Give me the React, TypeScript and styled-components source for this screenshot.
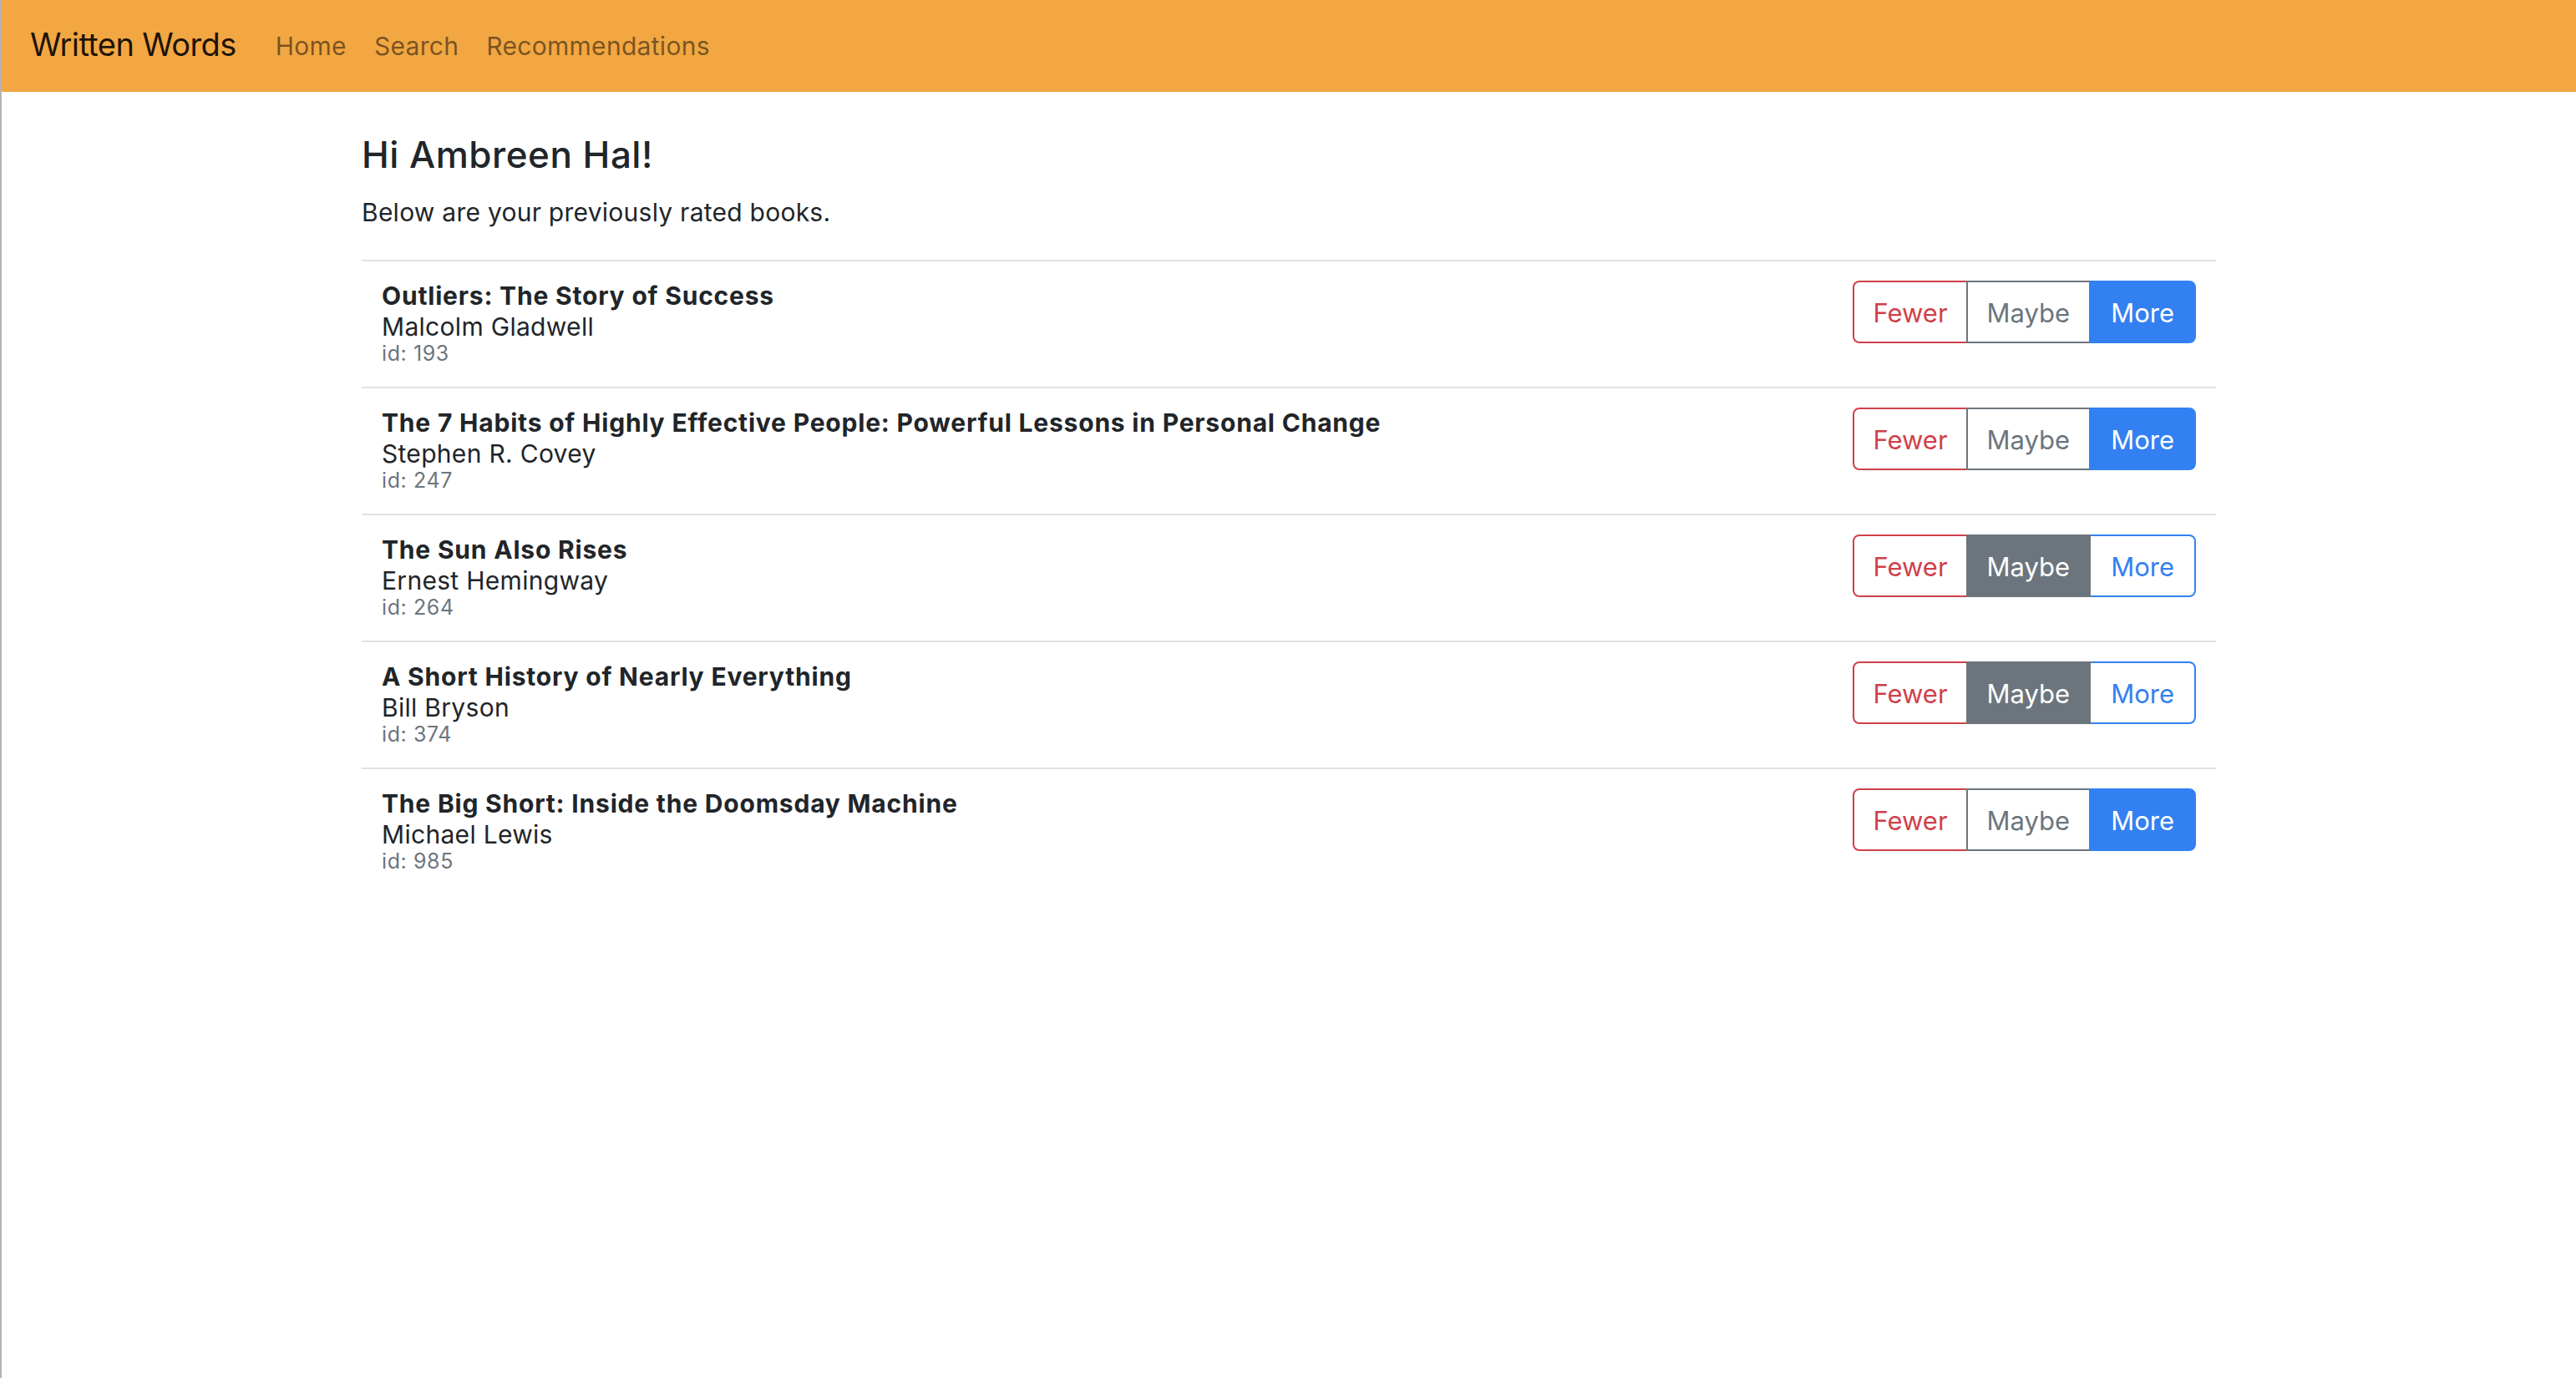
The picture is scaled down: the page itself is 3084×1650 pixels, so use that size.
import React from "react";
import styled, { createGlobalStyle, css } from "styled-components";

const GlobalStyle = createGlobalStyle`
  html, body {
    margin: 0;
    padding: 0;
    background: #ffffff;
  }
  body {
    font-family: Inter, "Noto Sans", "Liberation Sans", sans-serif;
    color: #212529;
  }
  * { box-sizing: border-box; }
`;

const Page = styled.div`
  min-height: 100vh;
  border-left: 2px solid #b4b4b4;
`;

const NavBar = styled.nav`
  height: 110px;
  background: #f2a742;
  display: flex;
  align-items: center;
  padding: 0 0 0 34px;
`;

const Brand = styled.a`
  font-size: 38px;
  line-height: 50px;
  color: rgba(0, 0, 0, 0.9);
  text-decoration: none;
  padding-bottom: 4px;
  margin-right: 47px;
  letter-spacing: -0.6px;
`;

const NavLinks = styled.div`
  display: flex;
  align-items: center;
  gap: 33px;
`;

const NavLink = styled.a`
  font-size: 30px;
  line-height: 40px;
  color: rgba(0, 0, 0, 0.5);
  text-decoration: none;
  letter-spacing: 0.3px;
`;

const Container = styled.main`
  width: 2220px;
  margin: 0 auto;
  padding-top: 49px;
`;

const Heading = styled.h4`
  margin: 0;
  font-size: 44px;
  line-height: 52px;
  font-weight: 500;
  letter-spacing: 0.5px;
`;

const Intro = styled.p`
  margin: 23px 0 37px;
  font-size: 30px;
  line-height: 40px;
  letter-spacing: 0.25px;
`;

const List = styled.ul`
  list-style: none;
  margin: 0;
  padding: 0;
`;

const Row = styled.li`
  border-top: 2px solid #dee2e6;
  padding: 23px 24px 26px;
  display: flex;
  justify-content: space-between;
  align-items: flex-start;
`;

const BookInfo = styled.div`
  display: flex;
  flex-direction: column;
`;

const Title = styled.div`
  font-size: 30px;
  line-height: 37px;
  font-weight: 700;
  letter-spacing: 0.8px;
`;

const Author = styled.div`
  font-size: 30px;
  line-height: 37px;
  letter-spacing: 0.3px;
`;

const BookId = styled.div`
  font-size: 25px;
  line-height: 27px;
  color: #6c757d;
  letter-spacing: 0.6px;
`;

const ButtonGroup = styled.div`
  display: flex;
`;

type Variant = "red" | "gray" | "blue";
const palette: Record<Variant, string> = {
  red: "#d0404a",
  gray: "#6c757d",
  blue: "#3380f2",
};

const RateButton = styled.button<{ $variant: Variant; $active?: boolean; $pos: "first" | "mid" | "last" }>`
  position: relative;
  font-family: inherit;
  font-size: 31px;
  line-height: 47px;
  padding: 13px 24px 11px;
  border: 2px solid ${(p) => palette[p.$variant]};
  background: ${(p) => (p.$active ? palette[p.$variant] : "#ffffff")};
  color: ${(p) => (p.$active ? "#ffffff" : palette[p.$variant])};
  z-index: ${(p) => (p.$active ? 1 : 0)};
  cursor: pointer;
  border-radius: 0;
  ${(p) =>
    p.$pos === "first" &&
    css`
      border-radius: 8px 0 0 8px;
      padding-left: 22px;
      padding-right: 22px;
    `}
  ${(p) =>
    p.$pos === "mid" &&
    css`
      padding-left: 23px;
      padding-right: 23px;
    `}
  ${(p) =>
    p.$pos !== "first" &&
    css`
      margin-left: -2px;
    `}
  ${(p) =>
    p.$pos === "last" &&
    css`
      border-radius: 0 8px 8px 0;
    `}
`;

type Rating = "fewer" | "maybe" | "more";

const books: { title: string; author: string; id: number; rating: Rating }[] = [
  { title: "Outliers: The Story of Success", author: "Malcolm Gladwell", id: 193, rating: "more" },
  {
    title: "The 7 Habits of Highly Effective People: Powerful Lessons in Personal Change",
    author: "Stephen R. Covey",
    id: 247,
    rating: "more",
  },
  { title: "The Sun Also Rises", author: "Ernest Hemingway", id: 264, rating: "maybe" },
  { title: "A Short History of Nearly Everything", author: "Bill Bryson", id: 374, rating: "maybe" },
  { title: "The Big Short: Inside the Doomsday Machine", author: "Michael Lewis", id: 985, rating: "more" },
];

export default function App() {
  return (
    <Page>
      <GlobalStyle />
      <NavBar>
        <Brand href="#">Written Words</Brand>
        <NavLinks>
          <NavLink href="#">Home</NavLink>
          <NavLink href="#">Search</NavLink>
          <NavLink href="#">Recommendations</NavLink>
        </NavLinks>
      </NavBar>
      <Container>
        <Heading>Hi Ambreen Hal!</Heading>
        <Intro>Below are your previously rated books.</Intro>
        <List>
          {books.map((b) => (
            <Row key={b.id}>
              <BookInfo>
                <Title>{b.title}</Title>
                <Author>{b.author}</Author>
                <BookId>id: {b.id}</BookId>
              </BookInfo>
              <ButtonGroup>
                <RateButton $variant="red" $pos="first" $active={b.rating === "fewer"}>
                  Fewer
                </RateButton>
                <RateButton $variant="gray" $pos="mid" $active={b.rating === "maybe"}>
                  Maybe
                </RateButton>
                <RateButton $variant="blue" $pos="last" $active={b.rating === "more"}>
                  More
                </RateButton>
              </ButtonGroup>
            </Row>
          ))}
        </List>
      </Container>
    </Page>
  );
}
